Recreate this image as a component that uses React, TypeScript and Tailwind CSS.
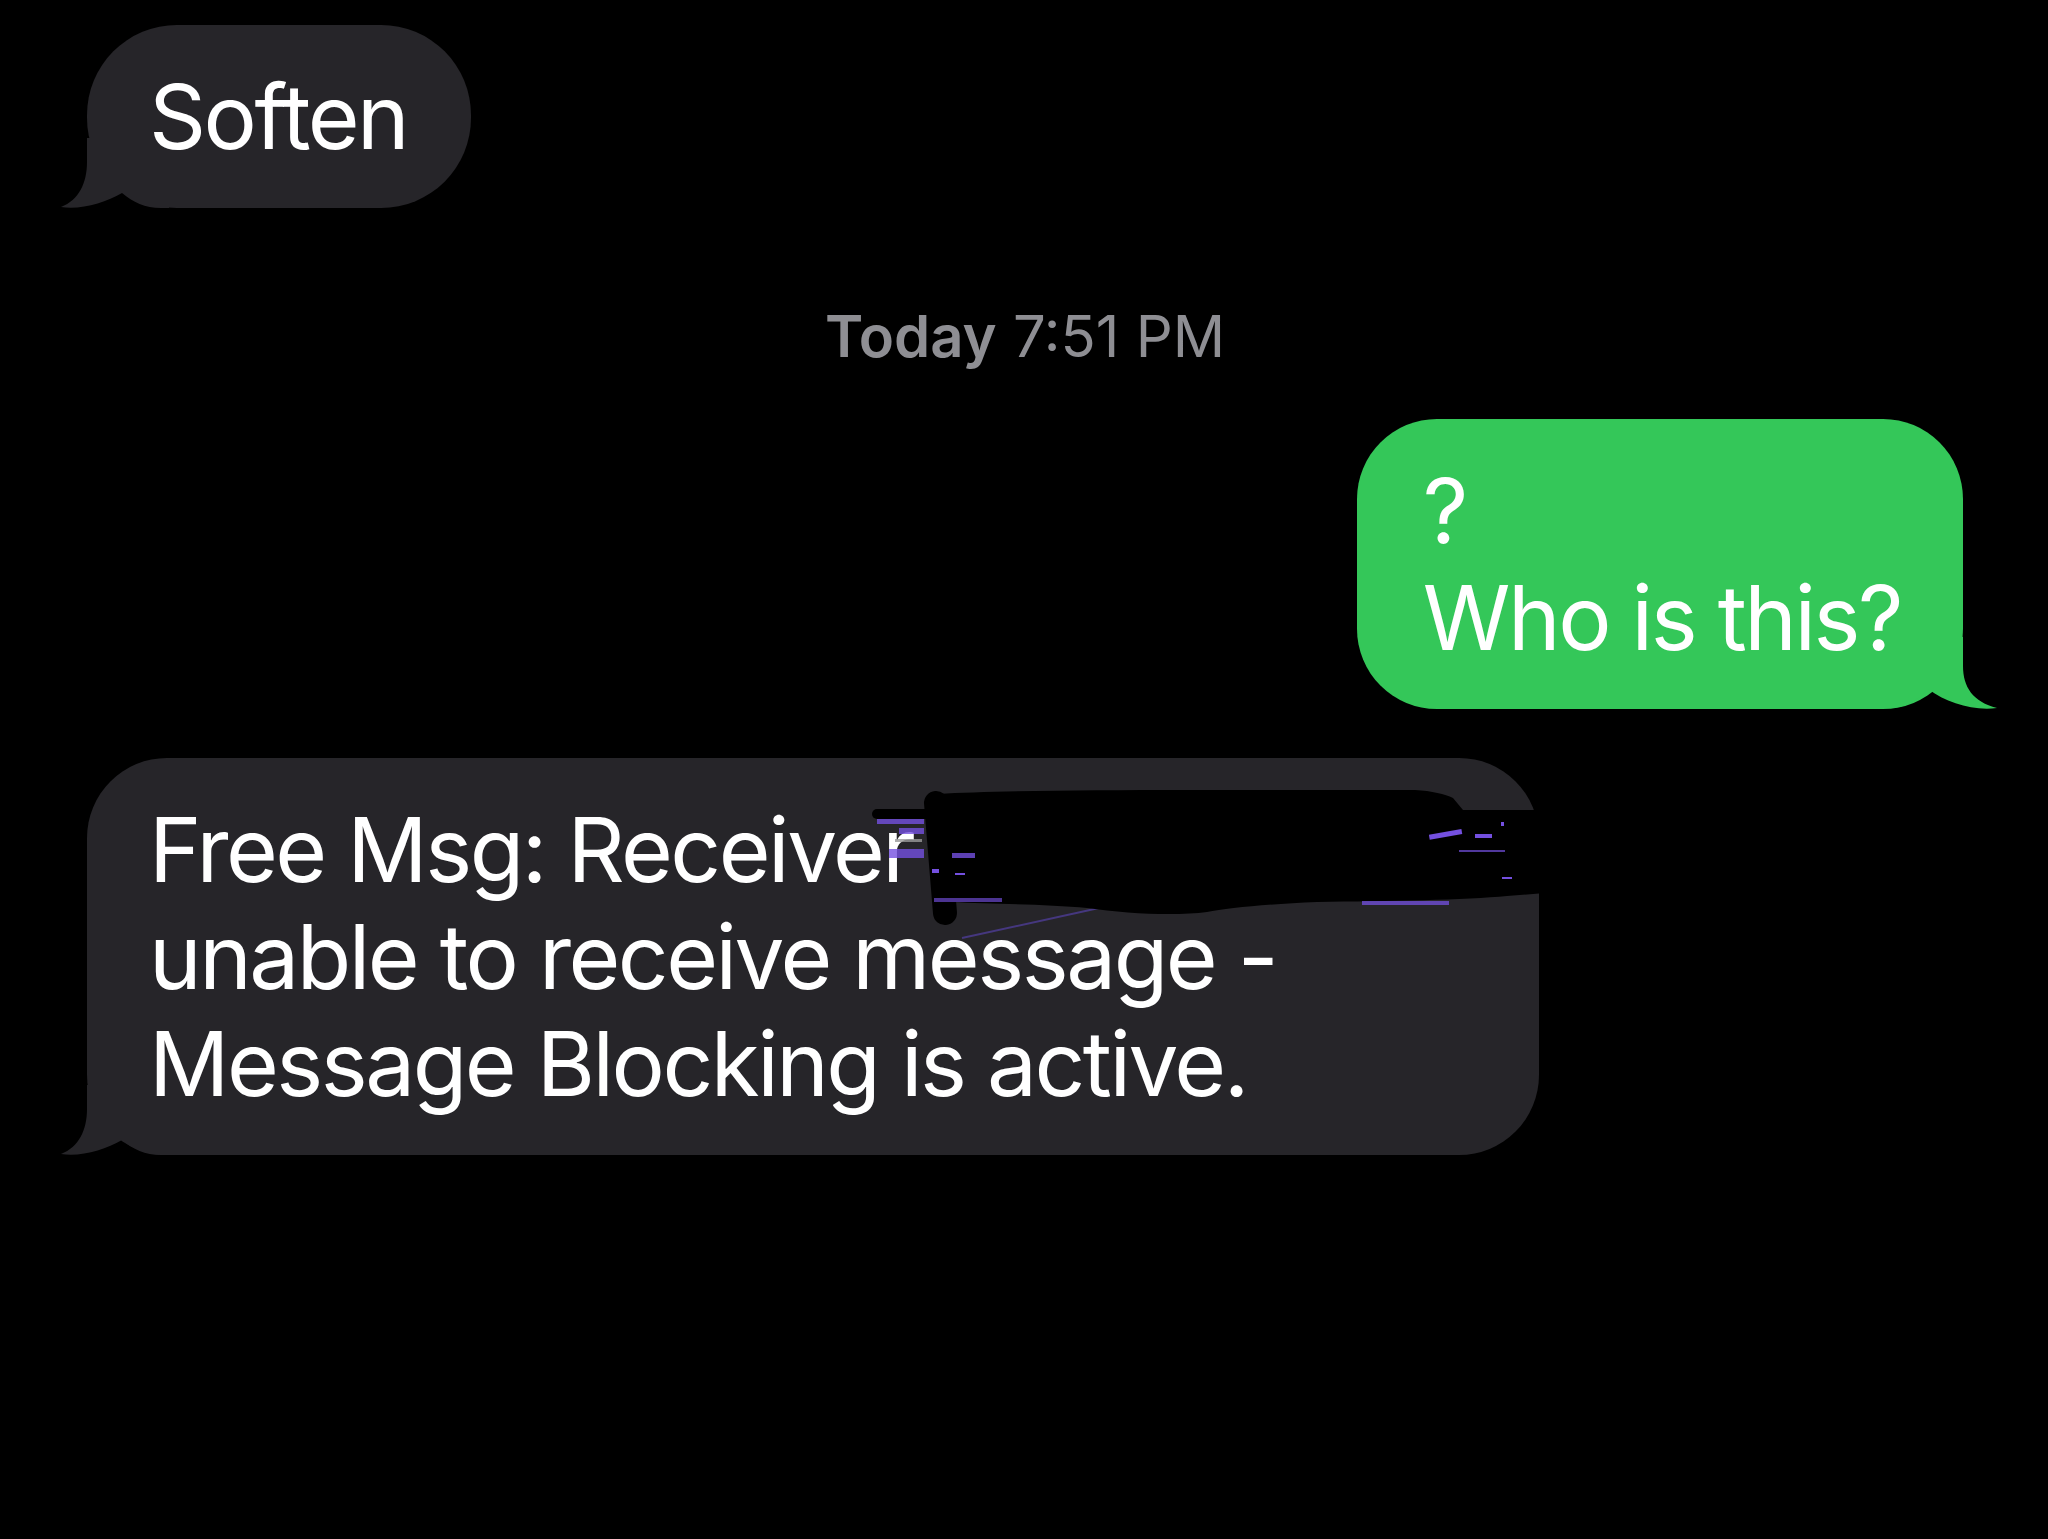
import React from "react";

function Tail({ side, color }: { side: "left" | "right"; color: string }) {
  if (side === "left") {
    return (
      <svg
        className="absolute bottom-0 -left-[30px]"
        width="112"
        height="70"
        viewBox="0 0 112 70"
      >
        <path
          d="M30 0 L30 24 C30 45 22 62 4 69 C 24 72 48 65 65 55 C 76 64 88 70 104 70 L112 70 L112 0 Z"
          fill={color}
        />
      </svg>
    );
  }
  return (
    <svg
      className="absolute bottom-0 -right-[34px]"
      width="116"
      height="72"
      viewBox="0 0 116 72"
    >
      <g transform="translate(116 0) scale(-1 1)">
        <path
          d="M34 0 L34 29 C34 50 24 65 0 71 C 24 74 50 66 69 52 C 80 64 92 71 108 71 L116 71 L116 0 Z"
          fill={color}
        />
      </g>
    </svg>
  );
}

function Redaction() {
  const purple = "#7450e0";
  return (
    <svg
      className="absolute left-0 top-0 pointer-events-none"
      width="1500"
      height="220"
      viewBox="0 0 1500 220"
    >
      <line x1="875" y1="180" x2="1012" y2="150" stroke="#5a44b8" strokeWidth="2" opacity="0.6" />
      <path
        d="M852 36 C 900 33, 1000 32, 1100 32 L1328 32 C 1345 33, 1358 36, 1366 40 L1376 52 L1470 52 L1470 134 L1420 138 C 1380 142, 1300 143, 1230 144 C 1180 146, 1140 150, 1120 154 C 1090 158, 1040 156, 1000 150 C 960 146, 900 146, 866 144 Z"
        fill="#000"
      />
      <line x1="790" y1="56" x2="856" y2="56" stroke="#000" strokeWidth="10" strokeLinecap="round" />
      <line x1="849" y1="45" x2="858" y2="155" stroke="#000" strokeWidth="24" strokeLinecap="round" />
      <g fill={purple}>
        <rect x="790" y="61" width="47" height="5" opacity="0.8" />
        <rect x="812" y="70" width="25" height="6" opacity="0.8" />
        <rect x="802" y="91" width="35" height="9" opacity="0.8" />
        <rect x="865" y="95" width="23" height="5" opacity="0.8" />
        <rect x="845" y="111" width="7" height="4" />
        <rect x="868" y="115" width="10" height="2" />
        <rect x="847" y="140" width="68" height="4" opacity="0.65" />
        <rect x="1342" y="74" width="33" height="5" transform="rotate(-10 1358 76)" />
        <rect x="1388" y="76" width="17" height="4" />
        <rect x="1414" y="64" width="3" height="4" />
        <rect x="1372" y="92" width="46" height="2" opacity="0.7" />
        <rect x="1275" y="143" width="87" height="4" opacity="0.75" />
        <rect x="1415" y="119" width="10" height="2" />
      </g>
      <rect x="808" y="81" width="27" height="3" fill="#9a9a9a" opacity="0.8" />
    </svg>
  );
}

export default function App() {
  const gray = "#262529";
  const green = "#34c759";
  return (
    <div
      className="min-h-screen w-full bg-black pt-[25px] pl-[87px] pr-[85px] text-white"
      style={{ fontFamily: "Inter, 'Noto Sans', sans-serif" }}
    >
      <div className="flex">
        <div className="relative w-fit rounded-[90px] bg-[#262529] pl-[62px] pr-[64px] py-[38px] text-[89px] leading-[107px] tracking-[-0.028em]">
          <Tail side="left" color={gray} />
          <span className="relative">Soften</span>
        </div>
      </div>

      <div className="mt-[93px] text-center text-[58px] leading-[70px] text-[#8e8e93]">
        <span className="font-semibold">Today</span> 7:51 PM
      </div>

      <div className="mt-[48px] flex justify-end">
        <div className="relative w-fit rounded-[80px] bg-[#34c759] py-[38px] pl-[66px] pr-[62px] text-[89px] leading-[107px] tracking-[-0.028em]">
          <Tail side="right" color={green} />
          <span className="relative">
            ?
            <br />
            Who is this?
          </span>
        </div>
      </div>

      <div className="mt-[49px] flex">
        <div className="relative w-[1452px] rounded-[80px] bg-[#262529] px-[62px] py-[38px] text-[89px] leading-[107px] tracking-[-0.028em]">
          <Tail side="left" color={gray} />
          <span className="relative">
            Free Msg: Receiver
            <br />
            unable to receive message -
            <br />
            Message Blocking is active.
          </span>
          <Redaction />
        </div>
      </div>
    </div>
  );
}
